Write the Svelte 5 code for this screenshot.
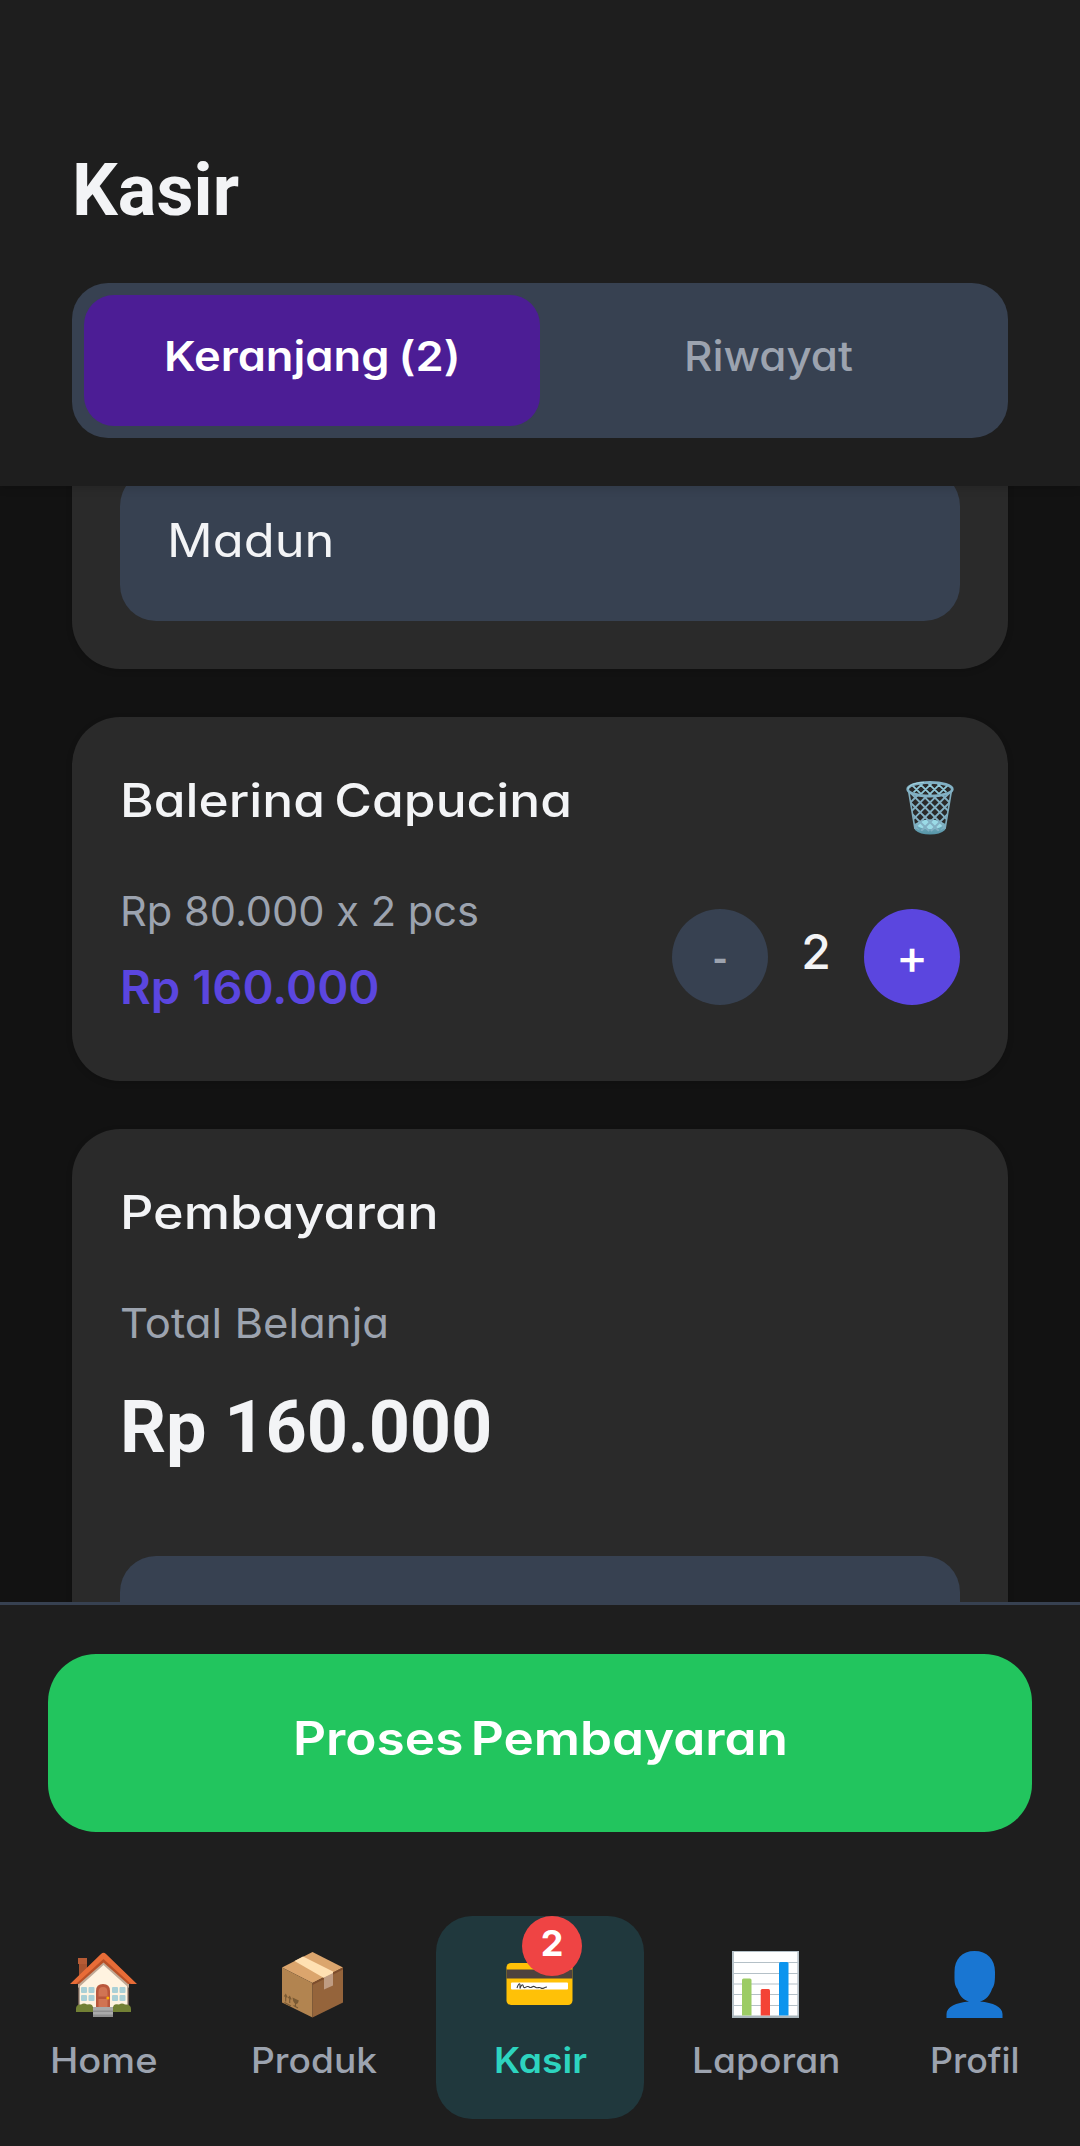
<script>
  // Widens a label horizontally until it takes up the given width.
  function stretch(node, width) {
    const natural = node.getBoundingClientRect().width;
    node.style.transform = `scaleX(${width / natural})`;
    node.style.marginRight = `${width - natural}px`;
  }

  const nav = [
    { id: 'home', label: 'Home', width: 107.5 },
    { id: 'box', label: 'Produk', width: 126 },
    { id: 'card', label: 'Kasir', width: 93, active: true, badge: 2 },
    { id: 'chart', label: 'Laporan', width: 148.5 },
    { id: 'user', label: 'Profil', width: 89.5 }
  ];
</script>

<div class="screen">
  <header class="header">
    <h1>Kasir</h1>
    <div class="tabs">
      <button class="tab active"><span class="label" use:stretch={296.5}>Keranjang (2)</span></button>
      <button class="tab"><span class="label" use:stretch={169}>Riwayat</span></button>
    </div>
  </header>

  <main class="content">
    <section class="card customer">
      <div class="field"><span class="label" use:stretch={167.5}>Madun</span></div>
    </section>

    <section class="card item">
      <div class="item-head">
        <h2><span class="label" use:stretch={452}>Balerina Capucina</span></h2>
        <svg class="trash" viewBox="0 0 48 54" aria-label="Hapus">
          <defs>
            <linearGradient id="base" x1="0" y1="0" x2="0" y2="1">
              <stop offset="0" stop-color="#83bccb" />
              <stop offset="1" stop-color="#5593a6" />
            </linearGradient>
            <clipPath id="basket"><path d="M3 12Q24 20 45 12L39 47Q24 56 9 47Z" /></clipPath>
            <clipPath id="mouth"><ellipse cx="24" cy="8" rx="20" ry="6" /></clipPath>
          </defs>
          <path d="M8.500 43Q24 34 39.500 43L39 49Q34 53.500 24 53.500T9 49Z" fill="url(#base)" />
          <ellipse cx="24" cy="43.500" rx="13" ry="4.700" fill="#9bdbe7" />
          <g clip-path="url(#basket)" stroke="#82afc2" stroke-width="1.900">
            <path d="M-36.500 10l40 40M-26.700 10l40 40M-16.900 10l40 40M-7.100 10l40 40M2.700 10l40 40M12.500 10l40 40M22.300 10l40 40M32.100 10l40 40" />
            <path d="M15.900 10l-40 40M25.700 10l-40 40M35.500 10l-40 40M45.300 10l-40 40M55.100 10l-40 40M64.900 10l-40 40M74.700 10l-40 40M6.100 10l-40 40" />
          </g>
          <g clip-path="url(#mouth)" stroke="#8ec6d6" stroke-width="1.800">
            <path d="M2 0l16 16M11 0l16 16M20 0l16 16M29 0l16 16M38 0l16 16M10 0L-6 16M19 0L3 16M28 0L12 16M37 0L21 16M46 0L30 16" />
          </g>
          <path d="M2.800 11L9 48M45.200 11L39 48" stroke="#80acbd" stroke-width="1.600" fill="none" />
          <ellipse cx="24" cy="8.300" rx="22.300" ry="6.900" fill="none" stroke="#82b1c4" stroke-width="2.800" />
          <path d="M2 8Q3 2 18 1.300" fill="none" stroke="#a4d4df" stroke-width="1" />
        </svg>
      </div>
      <div class="item-body">
        <div class="prices">
          <p class="muted"><span class="label" use:stretch={359}>Rp 80.000 x 2 pcs</span></p>
          <p class="subtotal"><span class="label" use:stretch={259.5}>Rp 160.000</span></p>
        </div>
        <div class="stepper">
          <button class="round minus">-</button>
          <span class="qty">2</span>
          <button class="round plus">+</button>
        </div>
      </div>
    </section>

    <section class="card payment">
      <h2><span class="label" use:stretch={318.5}>Pembayaran</span></h2>
      <p class="muted"><span class="label" use:stretch={269}>Total Belanja</span></p>
      <p class="total">Rp 160.000</p>
      <div class="field"></div>
    </section>
  </main>

  <footer class="checkout">
    <button class="pay"><span class="label" use:stretch={495}>Proses Pembayaran</span></button>
  </footer>

  <nav class="nav">
    {#each nav as entry}
      <a class="nav-item" class:active={entry.active} href="#{entry.id}">
        <svg class="nav-icon" viewBox="0 0 67 67" aria-hidden="true">
          {#if entry.id === 'home'}
            <path d="M8 7h9v18H9V13H8Z" fill="#a9532f" />
            <path d="M8 7h9v6H8Z" fill="#b65b35" />
            <path d="M8 31L33.500 8 59 31v25H8Z" fill="#fff3e0" />
            <path d="M8 30h1.500v25H8ZM57.500 30H59v25h-1.500Z" fill="#6d5a50" />
            <path d="M8 37V31L33.500 9 59 31v6L33.500 14Z" fill="#bfa996" />
            <path d="M0 33L31 3Q33.500 .500 36 3L67 33H59L33.500 9 8 33Z" fill="#e86c37" />
            <path d="M6 33L33.500 8 61 33H58L33.500 11.500 9 33Z" fill="#b95128" />
            <g fill="#a9d0d6">
              <rect x="11" y="36" width="6" height="6" rx="1" /><rect x="18.500" y="36" width="6" height="6" rx="1" />
              <rect x="11" y="44" width="6" height="6" rx="1" /><rect x="18.500" y="44" width="6" height="6" rx="1" />
              <rect x="42" y="36" width="6" height="6" rx="1" /><rect x="49.500" y="36" width="6" height="6" rx="1" />
              <rect x="42" y="44" width="6" height="6" rx="1" /><rect x="49.500" y="44" width="6" height="6" rx="1" />
            </g>
            <path d="M26 58V40Q26 33 33 33T40 40V58Z" fill="#b9573c" />
            <path d="M28.500 45.500V41Q28.500 36 33 36T37.500 41V45.500ZM28.500 48h9v8.500h-9Z" fill="#d17453" />
            <circle cx="37.800" cy="47" r="1.500" fill="#ffb300" />
            <path d="M6 61v-3Q6 53 11 53.500Q14 51.500 17 53.500Q23 52 23 57v4ZM43 61v-4Q43 52 49 53.500Q52 51.500 55 53.500Q61 53 61 58v3Z" fill="#728034" />
            <path d="M23 56h20v10H23Z" fill="#aaa" />
            <path d="M23 59.500h20v1.500H23ZM23 63.500h20V66H23Z" fill="#8f8f8f" />
          {:else if entry.id === 'box'}
            <path d="M3 16.500L33.500 1 64 16.500 33.500 32Z" fill="#dba56d" />
            <path d="M3 16.500L33.500 32V66.500L3 51.500Z" fill="#b28450" />
            <path d="M33.500 32L64 16.500V51.500L33.500 66.500Z" fill="#95643b" />
            <path d="M33.500 32L64 16.500V18.500L33.500 34Z" fill="#7d4d2c" />
            <path d="M15.500 10L24 5.500 54 20.500V23L45 27Z" fill="#ffe0b2" />
            <path d="M45 26.500L54 22V34.500L45 38.500Z" fill="#bf9c82" />
            <path d="M6.700 50.500V44M5.300 45.500L6.700 43.500 8.200 46.500M10.700 52V46M9.300 47.200L10.700 45.500 12.200 48.500M5.500 51.500L12 55M16.500 52V56M14.500 54.500L19 57" stroke="#7a5a34" stroke-width="1.100" fill="none" />
            <path d="M13.500 46.500L19.800 49.500Q19 53.500 16.500 53Q14 51.500 13.500 46.500Z" fill="#7a5a34" />
          {:else if entry.id === 'card'}
            <rect x="0.500" y="12" width="66" height="42" rx="4.500" fill="#ffc107" />
            <path d="M.500 18.500h66v9H.500Z" fill="#4e423e" />
            <rect x="5" y="31.500" width="57" height="7" rx="1" fill="#fff" />
            <path d="M11 37C12 33 14 31.500 14 34V37.500C15 34 17 32 17.500 36C19 38 20 35 22 35.500S24 37.500 26 36S28 35.500 30 36.500S33 35.500 35 37S38 36 41 36" fill="none" stroke="#3b3b3b" stroke-width="1.100" />
          {:else if entry.id === 'chart'}
            <path d="M0 0h67v67H0Z" fill="#fff" />
            <path d="M0 .500h67M0 11.500h67M0 22.500h67M0 33h67M0 43.500h67M0 54.500h67" stroke="#b4c0c7" stroke-width="1.200" />
            <path d="M1 0V66M66.300 0V66" stroke="#b8c3c9" stroke-width="2" />
            <path d="M0 64.500h67V67H0Z" fill="#a8b5bb" />
            <path d="M10 64.500V29Q10 27.500 11.500 27.500H18Q19.500 27.500 19.500 29V64.500Z" fill="#9ccc65" />
            <path d="M28.700 64.500V39.500Q28.700 38 30.200 38H36.500Q38 38 38 39.500V64.500Z" fill="#f44336" />
            <path d="M47 64.500V12.500Q47 11 48.500 11H55Q56.500 11 56.500 12.500V64.500Z" fill="#0b94ee" />
          {:else}
            <path d="M33.500 0C46 0 54 8 54 21C54 29 54 34 51 38C49 44 45 49 39 50.500C52 51.500 61.500 56 61.500 63V67H5.500V63C5.500 56 15 51.500 28 50.500C22 49 18 44 16.500 38C13 34 13.500 29 13.500 21C13.500 8 21 0 33.500 0Z" fill="#1976d2" />
          {/if}
        </svg>
        <span class="label" use:stretch={entry.width}>{entry.label}</span>
        {#if entry.badge}<span class="badge">{entry.badge}</span>{/if}
      </a>
    {/each}
  </nav>
</div>

<style>
  :global(body) {
    background: #121212;
  }

  .screen {
    display: flex;
    flex-direction: column;
    width: 1080px;
    height: 2146px;
    overflow: hidden;
    background: #121212;
    color: #f3f4f6;
    font-family: Inter, 'Open Sans', sans-serif;
    font-feature-settings: 'cv11' 1, 'calt' 0;
    font-optical-sizing: none;
  }

  h1, h2, p {
    margin: 0;
  }

  button {
    border: 0;
    padding: 0;
    color: inherit;
    font: inherit;
    font-feature-settings: inherit;
    font-optical-sizing: inherit;
  }

  .label {
    display: inline-block;
    transform-origin: 0 50%;
    white-space: nowrap;
  }

  .header {
    position: relative;
    z-index: 1;
    flex: none;
    box-sizing: border-box;
    height: 486px;
    padding: 149px 72px 0;
    background: #1e1e1e;
    box-shadow: 0 3px 8px rgba(0, 0, 0, 0.12);
  }

  h1 {
    margin-bottom: 50px;
    font: 700 72px/84px Roboto, sans-serif;
    letter-spacing: 0.1px;
  }

  .tabs {
    display: flex;
    box-sizing: border-box;
    height: 155px;
    padding: 12px;
    border-radius: 36px;
    background: #374151;
  }

  .tab {
    display: flex;
    flex: 1;
    align-items: center;
    justify-content: center;
    padding-bottom: 9px;
    border-radius: 30px;
    background: none;
    color: #9ca3af;
    font-size: 41px;
    font-weight: 500;
  }

  .tab.active {
    background: #4c1d95;
    color: #fff;
    font-weight: 600;
    word-spacing: -2px;
  }

  .content {
    display: flex;
    flex: none;
    flex-direction: column;
    gap: 48px;
    height: 1116px;
    padding: 0 72px;
    overflow: hidden;
  }

  .card {
    flex: none;
    box-sizing: border-box;
    padding: 48px;
    border-radius: 48px;
    background: #2a2a2a;
    box-shadow: 0 2px 6px rgba(0, 0, 0, 0.15);
  }

  /* The list is scrolled, so the first card starts above the visible area. */
  .customer {
    margin-top: -64px;
  }

  .field {
    display: flex;
    align-items: center;
    box-sizing: border-box;
    height: 151px;
    padding: 0 48px 11px 47px;
    border-radius: 36px;
    background: #374151;
    font-size: 46px;
  }

  .item {
    height: 364px;
  }

  .item-head {
    display: flex;
    justify-content: space-between;
    height: 68px;
    margin-bottom: 48px;
  }

  h2 {
    height: 68px;
    font-size: 46px;
    font-weight: 500;
    line-height: 70px;
    word-spacing: -4px;
  }

  .trash {
    flex: none;
    width: 48px;
    height: 54px;
    margin: 16px 6px 0 0;
  }

  .item-body {
    display: flex;
    align-items: center;
    justify-content: space-between;
    height: 152px;
  }

  .prices {
    align-self: flex-start;
  }

  .muted {
    color: #9ca3af;
    font-size: 41px;
    line-height: 60px;
  }

  .subtotal {
    margin-top: 10px;
    color: #5b46df;
    font-size: 46px;
    font-weight: 600;
    line-height: 72px;
  }

  .stepper {
    display: flex;
    align-items: center;
  }

  .round {
    display: flex;
    align-items: center;
    justify-content: center;
    box-sizing: border-box;
    width: 96px;
    height: 96px;
    border-radius: 50%;
    font-weight: 500;
  }

  .minus {
    padding-top: 2px;
    background: #374151;
    color: #9ca3af;
    font-family: Lato, sans-serif;
    font-size: 42px;
    font-weight: 700;
  }

  .plus {
    padding-bottom: 2px;
    background: #5b46df;
    color: #fff;
    font-size: 48px;
  }

  .qty {
    width: 96px;
    padding-bottom: 11px;
    font-size: 48px;
    font-weight: 500;
    text-align: center;
  }

  .payment .muted {
    margin-top: 48px;
  }

  .total {
    margin: 30px 0 83px;
    font: 700 72px/90px Roboto, sans-serif;
    letter-spacing: -0.1px;
  }

  .checkout {
    flex: none;
    box-sizing: border-box;
    height: 278px;
    padding: 49px 48px 0;
    border-top: 3px solid #374151;
    background: #1e1e1e;
  }

  .pay {
    display: flex;
    align-items: center;
    justify-content: center;
    box-sizing: border-box;
    width: 100%;
    height: 178px;
    padding-bottom: 10px;
    border-radius: 48px;
    background: #22c55e;
    color: #fff;
    font-size: 46px;
    font-weight: 600;
    word-spacing: -5px;
  }

  .nav {
    display: grid;
    flex: 1;
    grid-template-columns: 208px 211px 242px 211px 206px;
    align-items: start;
    justify-items: center;
    padding-top: 36px;
    background: #1e1e1e;
  }

  .nav-item {
    position: relative;
    display: flex;
    flex-direction: column;
    align-items: center;
    gap: 15px;
    box-sizing: border-box;
    width: 208px;
    height: 203px;
    padding-top: 35px;
    border-radius: 36px;
    color: #9ca3af;
    font-size: 35px;
    font-weight: 500;
    line-height: 54px;
    text-decoration: none;
  }

  .nav-item.active {
    background: #20383d;
    color: #2dd4bf;
    font-weight: 600;
  }

  .nav-icon {
    flex: none;
    width: 67px;
    height: 67px;
    margin-right: 2px;
  }

  .badge {
    position: absolute;
    top: 0;
    left: 86px;
    box-sizing: border-box;
    width: 60px;
    height: 60px;
    border-radius: 50%;
    background: #ef4444;
    color: #fff;
    font-size: 36px;
    font-weight: 700;
    text-align: center;
  }
</style>
